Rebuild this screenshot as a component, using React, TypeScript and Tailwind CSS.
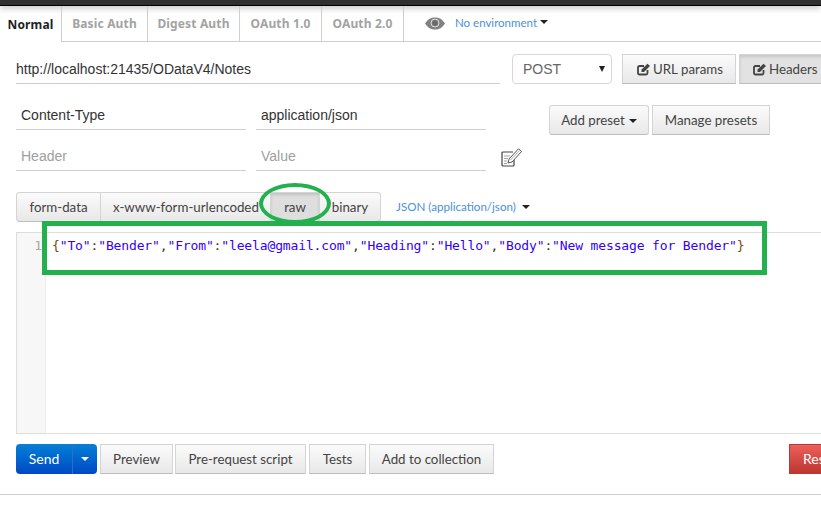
const authTabs = [
  { label: 'Normal', width: 'w-[62px]', active: true },
  { label: 'Basic Auth', width: 'w-[86px]', active: false },
  { label: 'Digest Auth', width: 'w-[92px]', active: false },
  { label: 'OAuth 1.0', width: 'w-[82px]', active: false },
  { label: 'OAuth 2.0', width: 'w-[82px]', active: false },
];

const gray = 'border border-[#d4d4d4] border-b-[#bdbdbd] bg-gradient-to-b from-[#fbfbfb] to-[#e8e8e8] text-[#444] text-[13.300px] pt-[2px] font-["Lato",sans-serif] flex items-center justify-center shrink-0';

function Caret({ color = 'border-t-[#222]' }: { color?: string }) {
  return <span className={`inline-block w-0 h-0 border-x-[4px] border-x-transparent border-t-[4px] ${color}`} />;
}

function EditIcon() {
  return (
    <svg width="14" height="13" viewBox="0 0 14 13" fill="none" className="shrink-0 -mt-[2px]">
      <path d="M10.500 7v3A1.500 1.500 0 0 1 9 11.500H2.500A1.500 1.500 0 0 1 1 10V4.500A1.500 1.500 0 0 1 2.500 3H7" stroke="#444" strokeWidth="1.8" />
      <path d="M4.500 6.500 10.500 .7 13 3 7 9H4.500z" fill="#444" />
    </svg>
  );
}

function EyeIcon() {
  return (
    <svg width="20" height="13" viewBox="0 0 20 13" className="shrink-0">
      <path d="M0 6.500C3 2 6 .5 10 .5s7 1.500 10 6c-3 4.500-6 6-10 6s-7-1.500-10-6z" fill="#808080" />
      <circle cx="10" cy="6" r="4" fill="none" stroke="#dcdcdc" strokeWidth="1" />
      <circle cx="10" cy="6" r="2.500" fill="#6a6a6a" />
    </svg>
  );
}

function Underlined({ className, children }: { className: string; children: React.ReactNode }) {
  return <div className={`border-b border-[#cfcfcf] h-[30px] pt-[2px] flex items-center text-[14px] ${className}`}>{children}</div>;
}

export default function App() {
  return (
    <div className="relative w-[821px] h-[523px] overflow-hidden bg-white font-['Liberation_Sans',sans-serif] text-[#333]">
      <div className="h-[6px] bg-[#303030] border-b border-black shadow-[0_2px_6px_rgba(0,0,0,0.25)]" />

      {/* auth tabs */}
      <div className="flex h-[36px]">
        {authTabs.map((tab) => (
          <div
            key={tab.label}
            className={`${tab.width} pt-[1px] flex items-center justify-center border-r border-[#cfcfcf] text-[12px] font-bold tracking-[0.15px] font-['Noto_Sans',sans-serif] ${tab.active ? 'text-[#222]' : 'border-b text-[#a3a3a3]'}`}
          >
            {tab.label}
          </div>
        ))}
        <div className="flex-1 border-b border-[#cfcfcf] flex items-center pl-[21px] pb-[1px]">
          <EyeIcon />
          <span className="ml-[10px] text-[11.500px] text-[#4a90d9] font-['Lato',sans-serif]">No environment</span>
          <span className="ml-[3px] mb-[2px] flex"><Caret /></span>
        </div>
      </div>

      {/* url row */}
      <div className="flex mt-[12px] ml-[16px] w-[900px]">
        <Underlined className="w-[484px] text-[#333]">http://localhost:21435/ODataV4/Notes</Underlined>
        <div className="ml-[12px] w-[100px] h-[30px] border border-[#d8d8d8] rounded-[4px] pl-[10px] pr-[6px] flex items-center justify-between text-[14px] text-[#666]">
          POST
          <span className="inline-block w-0 h-0 border-x-[3px] border-x-transparent border-t-[6px] border-t-[#222]" />
        </div>
        <div className={`${gray} ml-[10px] w-[114px] h-[30px] gap-[2px] justify-start pl-[14px]`}>
          <EditIcon /> URL params
        </div>
        <div className={`${gray} ml-[3px] w-[114px] h-[30px] gap-[2px] justify-start pl-[13px] bg-none bg-[#e2e2e2] shadow-[inset_0_2px_3px_rgba(0,0,0,0.12)]`}>
          <EditIcon /> Headers
        </div>
      </div>

      {/* headers */}
      <div className="flex ml-[16px] mt-[16px]">
        <div className="flex flex-col gap-[11px] w-[230px]">
          <Underlined className="pl-[5px] w-full text-[#333]">Content-Type</Underlined>
          <Underlined className="pl-[5px] w-full text-[#a0a0a0]">Header</Underlined>
        </div>
        <div className="flex flex-col gap-[11px] w-[230px] ml-[10px]">
          <Underlined className="pl-[5px] w-full text-[#333]">application/json</Underlined>
          <Underlined className="pl-[5px] w-full text-[#a0a0a0]">Value</Underlined>
        </div>
        <div className="flex flex-col ml-[14px]">
          <div className="flex ml-[49px] mt-[5px] gap-[3px]">
            <div className={`${gray} w-[100px] h-[30px] rounded-[3px] gap-[4px]`}>
              Add preset <Caret />
            </div>
            <div className={`${gray} w-[118px] h-[30px]`}>Manage presets</div>
          </div>
          <svg className="mt-[13px] ml-[1px]" width="21" height="19" viewBox="0 0 21 19" fill="none">
            <path d="M12 4H2a1 1 0 0 0-1 1v12a1 1 0 0 0 1 1h10a1 1 0 0 0 1-1V11" stroke="#444" strokeWidth="1.2" />
            <path d="M3 8h6M3 10.500h4M3 13h3M3 15.500h3" stroke="#888" strokeWidth="0.8" />
            <path d="M7 15l1-4L17.500 .8l3 2.700L11 14z" fill="#fff" stroke="#555" strokeWidth="1" />
            <path d="M9.500 12 18.500 2.500" stroke="#999" strokeWidth="0.8" />
          </svg>
        </div>
      </div>

      {/* body type tabs */}
      <div className="flex items-center ml-[16px] mt-[21px]">
        <div className={`${gray} w-[85px] h-[30px] rounded-l-[4px]`}>form-data</div>
        <div className={`${gray} w-[170px] h-[30px] border-l-0 justify-start pl-[12px] whitespace-nowrap`}>x-www-form-urlencoded</div>
        <div className={`${gray} w-[49px] h-[30px] border-l-0 bg-none bg-[#dedede] shadow-[inset_0_2px_3px_rgba(0,0,0,0.12)]`}>raw</div>
        <div className={`${gray} w-[61px] h-[30px] border-l-0 rounded-r-[4px]`}>binary</div>
        <span className="ml-[15px] text-[11.600px] text-[#4a90d9] font-['Lato',sans-serif]">JSON (application/json)</span>
        <span className="ml-[6px] flex"><Caret /></span>
      </div>

      {/* editor */}
      <div className="flex ml-[16px] mt-[10px] h-[202px] border-y border-l border-[#ddd]">
        <div className="w-[29px] shrink-0 bg-[#f7f7f7] border-r border-[#eee] pr-[3px] pt-[4px] text-right text-[13px] leading-[17px] text-[#aaa] font-['DejaVu_Sans_Mono',monospace]">1</div>
        <div className="pl-[6px] pt-[4px] text-[13px] leading-[17px] tracking-[-0.135px] whitespace-nowrap text-[#3300ff] font-['DejaVu_Sans_Mono',monospace]">
          <span className="text-[#7a4a00]">{'{'}</span>"To"<span className="text-[#333]">:</span>"Bender"<span className="text-[#333]">,</span>"From"<span className="text-[#333]">:</span>"leela@gmail.com"<span className="text-[#333]">,</span>"Heading"<span className="text-[#333]">:</span>"Hello"<span className="text-[#333]">,</span>"Body"<span className="text-[#333]">:</span>"New message for Bender"<span className="text-[#7a4a00]">{'}'}</span>
        </div>
      </div>

      {/* actions */}
      <div className="flex ml-[16px] mt-[10px] h-[30px] w-[900px]">
        <div className="w-[56px] pb-[2px] rounded-l-[4px] bg-gradient-to-b from-[#0a7fd6] to-[#0048c4] text-white text-[14px] font-['Lato',sans-serif] flex items-center justify-center">Send</div>
        <div className="w-[25px] rounded-r-[4px] border-l border-[#2a6fc9] bg-gradient-to-b from-[#0a7fd6] to-[#0048c4] flex items-center justify-center">
          <Caret color="border-t-white" />
        </div>
        <div className={`${gray} ml-[3px] w-[73px]`}>Preview</div>
        <div className={`${gray} ml-[2px] w-[131px]`}>Pre-request script</div>
        <div className={`${gray} ml-[3px] w-[57px]`}>Tests</div>
        <div className={`${gray} ml-[3px] w-[125px]`}>Add to collection</div>
        <div className="ml-[295px] w-[60px] pb-[2px] border border-[#b83a38] bg-gradient-to-b from-[#ee5f5b] to-[#bd362f] text-white text-[14px] font-['Lato',sans-serif] flex items-center pl-[13px]">Reset</div>
      </div>

      <div className="mt-[20px] border-t border-[#cfcfcf]" />

      {/* green annotations drawn on the screenshot */}
      <div className="absolute left-[42px] top-[221px] w-[725px] h-[54px] border-[5px] border-[#22b14c]" />
      <div className="absolute left-[259px] top-[183px] w-[72px] h-[41px] rounded-[50%] border-[4px] border-[#22b14c]" />
    </div>
  );
}
